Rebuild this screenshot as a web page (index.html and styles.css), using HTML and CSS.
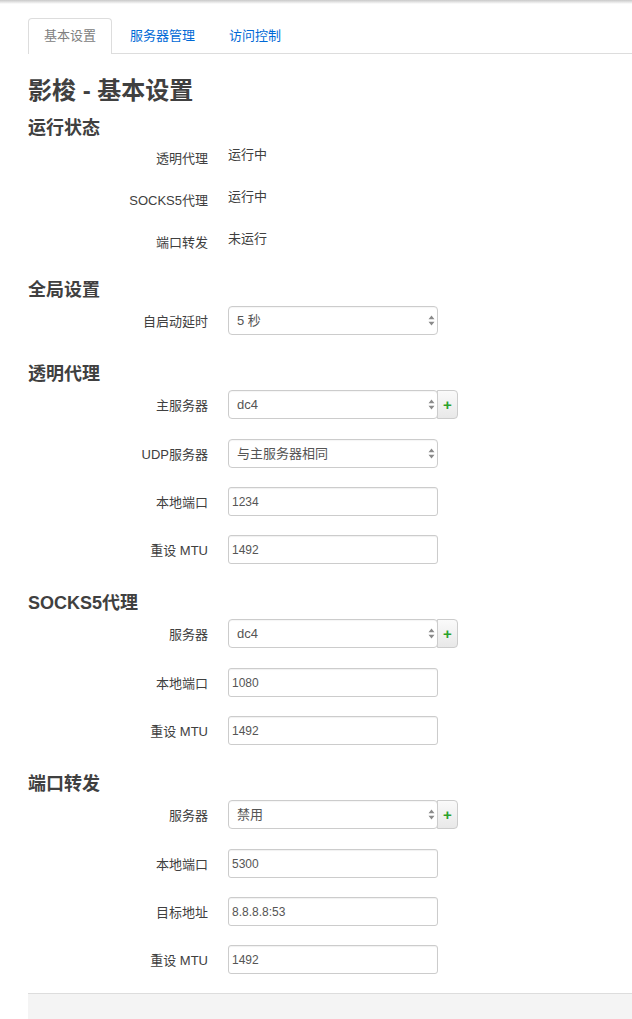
FILE: index.html
```html
<!DOCTYPE html>
<html lang="zh-CN">
<head>
    <meta charset="UTF-8">
    <meta name="viewport" content="width=device-width, initial-scale=1.0">
    <title>影梭 - 基本设置</title>
    <link rel="stylesheet" href="styles.css">
</head>
<body>
    <div class="topshade"></div>
    <div class="container">
        <ul class="tabs">
            <li class="active"><a href="#">基本设置</a></li>
            <li><a href="#">服务器管理</a></li>
            <li><a href="#">访问控制</a></li>
        </ul>

        <h2>影梭 - 基本设置</h2>

        <h3>运行状态</h3>
        <div class="status">
            <div class="srow"><span class="label">透明代理</span><span class="value">运行中</span></div>
            <div class="srow"><span class="label">SOCKS5代理</span><span class="value">运行中</span></div>
            <div class="srow"><span class="label">端口转发</span><span class="value">未运行</span></div>
        </div>

        <h3>全局设置</h3>
        <div class="section">
            <div class="row">
                <label class="label">自启动延时</label>
                <div class="field">
                    <span class="select"><select><option>5 秒</option></select><svg class="arrows" width="7" height="11" viewBox="0 0 7 11"><path d="M3.5 0.5 L6.5 4.2 H0.5 Z M3.5 10.5 L6.5 6.8 H0.5 Z" fill="#8a8a8a"/></svg></span>
                </div>
            </div>
        </div>

        <h3>透明代理</h3>
        <div class="section">
            <div class="row">
                <label class="label">主服务器</label>
                <div class="field">
                    <span class="select"><select><option>dc4</option></select><svg class="arrows" width="7" height="11" viewBox="0 0 7 11"><path d="M3.5 0.5 L6.5 4.2 H0.5 Z M3.5 10.5 L6.5 6.8 H0.5 Z" fill="#8a8a8a"/></svg></span>
                    <button class="add">+</button>
                </div>
            </div>
            <div class="row">
                <label class="label">UDP服务器</label>
                <div class="field">
                    <span class="select"><select><option>与主服务器相同</option></select><svg class="arrows" width="7" height="11" viewBox="0 0 7 11"><path d="M3.5 0.5 L6.5 4.2 H0.5 Z M3.5 10.5 L6.5 6.8 H0.5 Z" fill="#8a8a8a"/></svg></span>
                </div>
            </div>
            <div class="row">
                <label class="label">本地端口</label>
                <div class="field"><input type="text" value="1234"></div>
            </div>
            <div class="row">
                <label class="label">重设 MTU</label>
                <div class="field"><input type="text" value="1492"></div>
            </div>
        </div>

        <h3>SOCKS5代理</h3>
        <div class="section">
            <div class="row">
                <label class="label">服务器</label>
                <div class="field">
                    <span class="select"><select><option>dc4</option></select><svg class="arrows" width="7" height="11" viewBox="0 0 7 11"><path d="M3.5 0.5 L6.5 4.2 H0.5 Z M3.5 10.5 L6.5 6.8 H0.5 Z" fill="#8a8a8a"/></svg></span>
                    <button class="add">+</button>
                </div>
            </div>
            <div class="row">
                <label class="label">本地端口</label>
                <div class="field"><input type="text" value="1080"></div>
            </div>
            <div class="row">
                <label class="label">重设 MTU</label>
                <div class="field"><input type="text" value="1492"></div>
            </div>
        </div>

        <h3>端口转发</h3>
        <div class="section">
            <div class="row">
                <label class="label">服务器</label>
                <div class="field">
                    <span class="select"><select><option>禁用</option></select><svg class="arrows" width="7" height="11" viewBox="0 0 7 11"><path d="M3.5 0.5 L6.5 4.2 H0.5 Z M3.5 10.5 L6.5 6.8 H0.5 Z" fill="#8a8a8a"/></svg></span>
                    <button class="add">+</button>
                </div>
            </div>
            <div class="row">
                <label class="label">本地端口</label>
                <div class="field"><input type="text" value="5300"></div>
            </div>
            <div class="row">
                <label class="label">目标地址</label>
                <div class="field"><input type="text" value="8.8.8.8:53"></div>
            </div>
            <div class="row">
                <label class="label">重设 MTU</label>
                <div class="field"><input type="text" value="1492"></div>
            </div>
        </div>

        <div class="actions"></div>
    </div>
</body>
</html>
```

FILE: styles.css
```css
body {
    margin: 0;
    padding: 0;
    font-family: "Liberation Sans", "Noto Sans CJK SC", sans-serif;
    font-size: 13px;
    color: #404040;
    background-color: #fff;
}

.topshade {
    height: 4px;
    background: linear-gradient(#c9c9c9, #fff);
}

.container {
    margin-left: 28px;
    padding-top: 14px;
}

.tabs {
    display: flex;
    margin: 0;
    padding: 0;
    list-style: none;
    border-bottom: 1px solid #ddd;
}

.tabs li {
    margin-right: 2px;
}

.tabs a {
    display: block;
    height: 34px;
    line-height: 34px;
    padding: 0 15px;
    color: #0069d6;
    text-decoration: none;
    border: 1px solid transparent;
    border-bottom: none;
    border-radius: 4px 4px 0 0;
}

.tabs li.active a {
    color: #808080;
    border-color: #ddd;
    background-color: #fff;
    margin-bottom: -1px;
    height: 35px;
}

h2 {
    margin: 23px 0 0;
    font-size: 24px;
    line-height: 28px;
    font-weight: bold;
    color: #404040;
}

h3 {
    margin: 28px 0 5px;
    font-size: 18px;
    line-height: 22px;
    font-weight: bold;
    color: #404040;
}

h2 + h3 {
    margin-top: 12px;
}

.status {
    display: flex;
    flex-direction: column;
    gap: 16px;
    margin-top: 5px;
    padding-bottom: 4px;
}

.srow {
    display: grid;
    grid-template-columns: 180px 1fr;
    column-gap: 20px;
    line-height: 22px;
}

.srow .label {
    text-align: right;
    padding-top: 4px;
    line-height: 22px;
}

.srow .value {
    color: #404040;
}

.status + h3 {
    margin-top: 21px;
}

.section {
    display: flex;
    flex-direction: column;
    gap: 19px;
}

.row {
    display: grid;
    grid-template-columns: 180px 1fr;
    column-gap: 20px;
    align-items: center;
    height: 29px;
}

.row:first-child:not(:last-child) {
    margin-bottom: 1px;
}

.row .label {
    text-align: right;
}

.field {
    display: flex;
    align-items: stretch;
    height: 29px;
}

.select {
    position: relative;
    display: block;
    width: 210px;
}

.select select {
    appearance: none;
    -webkit-appearance: none;
    width: 210px;
    height: 29px;
    margin: 0;
    padding: 0 20px 0 8px;
    border: 1px solid #ccc;
    border-radius: 4px;
    background-color: #fff;
    font-family: "Liberation Sans", "Noto Sans CJK SC", sans-serif;
    font-size: 13px;
    color: #555;
    box-shadow: inset 0 1px 1px rgba(0, 0, 0, 0.04);
}

.select .arrows {
    position: absolute;
    right: 3px;
    top: 9px;
}

.add {
    width: 21px;
    height: 29px;
    margin-left: -1px;
    padding: 0;
    border: 1px solid #ccc;
    border-radius: 0 4px 4px 0;
    background: linear-gradient(#fafafa, #e8e8e8);
    color: #2aa22a;
    font-family: "Liberation Sans", sans-serif;
    font-size: 15px;
    font-weight: bold;
    line-height: 27px;
    cursor: pointer;
}

.field input {
    box-sizing: border-box;
    width: 210px;
    height: 29px;
    margin: 0;
    padding: 0 3px;
    border: 1px solid #ccc;
    border-radius: 3px;
    font-family: "Liberation Sans", "Noto Sans CJK SC", sans-serif;
    font-size: 12px;
    color: #555;
    box-shadow: inset 0 1px 1px rgba(0, 0, 0, 0.06);
}

.actions {
    margin-top: 19px;
    height: 40px;
    border-top: 1px solid #ddd;
    background-color: #f4f4f4;
}
```
